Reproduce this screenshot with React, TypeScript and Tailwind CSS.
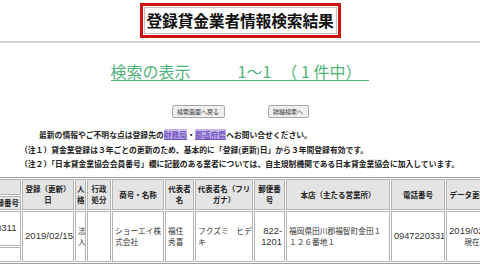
import React from "react";

const jp = { fontFamily: '"Noto Sans CJK JP", "Noto Sans", sans-serif' };

function Num({ children, size = "text-[9.6px]" }: { children: React.ReactNode; size?: string }) {
  return (
    <span className={size} style={{ fontFamily: '"Liberation Sans", Arial, sans-serif' }}>
      {children}
    </span>
  );
}

const th =
  "border border-[#b4b4b4] bg-[#e4e4e4] px-[1px] text-center align-middle text-[7.5px] font-bold leading-[11px] text-[#222]";
const td =
  "border border-[#b4b4b4] bg-white px-[2px] align-middle text-[7.7px] leading-[11.5px] text-[#333] whitespace-nowrap overflow-hidden";

export default function App() {
  return (
    <div className="h-[270px] w-[480px] overflow-hidden bg-white" style={jp}>
      {/* Title */}
      <div className="flex justify-center pt-[3px]">
        <div className="h-[35px] w-[201px] border-[3px] border-[#d01010] p-[1px]">
          <div className="flex h-full items-center justify-center border border-[#c0c0c0] bg-white">
            <span className="text-[15.8px] font-bold leading-none tracking-[-0.2px] text-[#111]">
              登録貸金業者情報検索結果
            </span>
          </div>
        </div>
      </div>

      <div className="mt-[3px] h-[2px] bg-[#d4d4d4]" />

      {/* Result count */}
      <div className="mt-[18px] flex justify-center">
        <div className="inline-flex h-[20px] items-center border-b-[1.5px] border-[#4fb47a] pr-[8px] text-[16px] leading-[20px] text-[#4fb47a]">
          <span>検索の表示</span>
          <span className="ml-[47px]">1～1</span>
          <span className="ml-[10px]">（ 1 件中）</span>
        </div>
      </div>

      {/* Buttons */}
      <div className="mt-[24px] flex justify-center gap-[43px]">
        <button className="h-[13px] w-[53px] rounded-[2px] border border-[#a8a8a8] bg-[#efefef] text-[6px] leading-none text-[#333]">
          検索画面へ戻る
        </button>
        <button className="h-[13px] w-[41px] rounded-[2px] border border-[#a8a8a8] bg-[#efefef] text-[6px] leading-none text-[#333]">
          詳細検索へ
        </button>
      </div>

      {/* Notes */}
      <div className="mt-[10px] pl-[20px] text-[7.8px] font-bold leading-[14.5px] whitespace-nowrap text-[#222]">
        <p className="pl-[19px]">
          最新の情報やご不明な点は登録先の
          <span className="bg-[#c7b9ec] text-[#7457c2] underline">財務局</span>・
          <span className="bg-[#c7b9ec] text-[#7457c2] underline">都道府県</span>
          へお問い合せください。
        </p>
        <p>（注１）貸金業登録は３年ごとの更新のため、基本的に「登録(更新)日」から３年間登録有効です。</p>
        <p>（注２）「日本貸金業協会会員番号」欄に記載のある業者については、自主規制機関である日本貸金業協会に加入しています。</p>
      </div>

      {/* Result table */}
      <table className="mt-[5px] ml-[-20px] w-[518px] table-fixed border-separate border-spacing-[1px] border border-[#a0a0a0]">
        <colgroup>
          <col className="w-[39px]" />
          <col className="w-[52px]" />
          <col className="w-[11px]" />
          <col className="w-[24px]" />
          <col className="w-[52px]" />
          <col className="w-[29px]" />
          <col className="w-[58px]" />
          <col className="w-[31px]" />
          <col className="w-[104px]" />
          <col className="w-[54px]" />
          <col className="w-[52px]" />
        </colgroup>
        <thead>
          <tr className="h-[16px]">
            <th className={th}></th>
            <th rowSpan={2} className={th}>
              登録（更新）
              <br />日
            </th>
            <th rowSpan={2} className={th + " px-0"}>
              人<br />格
            </th>
            <th rowSpan={2} className={th}>
              行政
              <br />
              処分
            </th>
            <th rowSpan={2} className={th}>
              商号・名称
            </th>
            <th rowSpan={2} className={th}>
              代表者
              <br />名
            </th>
            <th rowSpan={2} className={th + " whitespace-nowrap"}>
              代表者名（フリ
              <br />
              ガナ）
            </th>
            <th rowSpan={2} className={th}>
              郵便番
              <br />号
            </th>
            <th rowSpan={2} className={th}>
              本店（主たる営業所）
            </th>
            <th rowSpan={2} className={th}>
              電話番号
            </th>
            <th rowSpan={2} className={th + " whitespace-nowrap"}>
              データ更新日
            </th>
          </tr>
          <tr className="h-[14px]">
            <th className={th + " text-right whitespace-nowrap"}>登録番号</th>
          </tr>
        </thead>
        <tbody>
          <tr className="h-[35px]">
            <td className={td}>
              第00<Num>311</Num>
            </td>
            <td rowSpan={2} className={td + " px-[1px]"}>
              <Num>2019/02/15</Num>
            </td>
            <td rowSpan={2} className={td + " px-0"}>
              法<br />人
            </td>
            <td rowSpan={2} className={td}></td>
            <td rowSpan={2} className={td}>
              ショーエイ株
              <br />
              式会社
            </td>
            <td rowSpan={2} className={td}>
              福住
              <br />
              秀喜
            </td>
            <td rowSpan={2} className={td}>
              フクズミ　ヒデ
              <br />キ
            </td>
            <td rowSpan={2} className={td + " px-[1px] text-right"}>
              <Num size="text-[9.4px]">822-</Num>
              <br />
              <Num size="text-[9.4px]">1201</Num>
            </td>
            <td rowSpan={2} className={td}>
              福岡県田川郡福智町金田１
              <br />
              １２６番地１
            </td>
            <td rowSpan={2} className={td + " px-[1px] text-center"}>
              <Num size="text-[9.2px]">0947220331</Num>
            </td>
            <td rowSpan={2} className={td + " text-center"}>
              <Num>2019/02/15</Num>
              <br />
              現在
            </td>
          </tr>
          <tr className="h-[15px]">
            <td className={td}></td>
          </tr>
        </tbody>
      </table>
    </div>
  );
}
